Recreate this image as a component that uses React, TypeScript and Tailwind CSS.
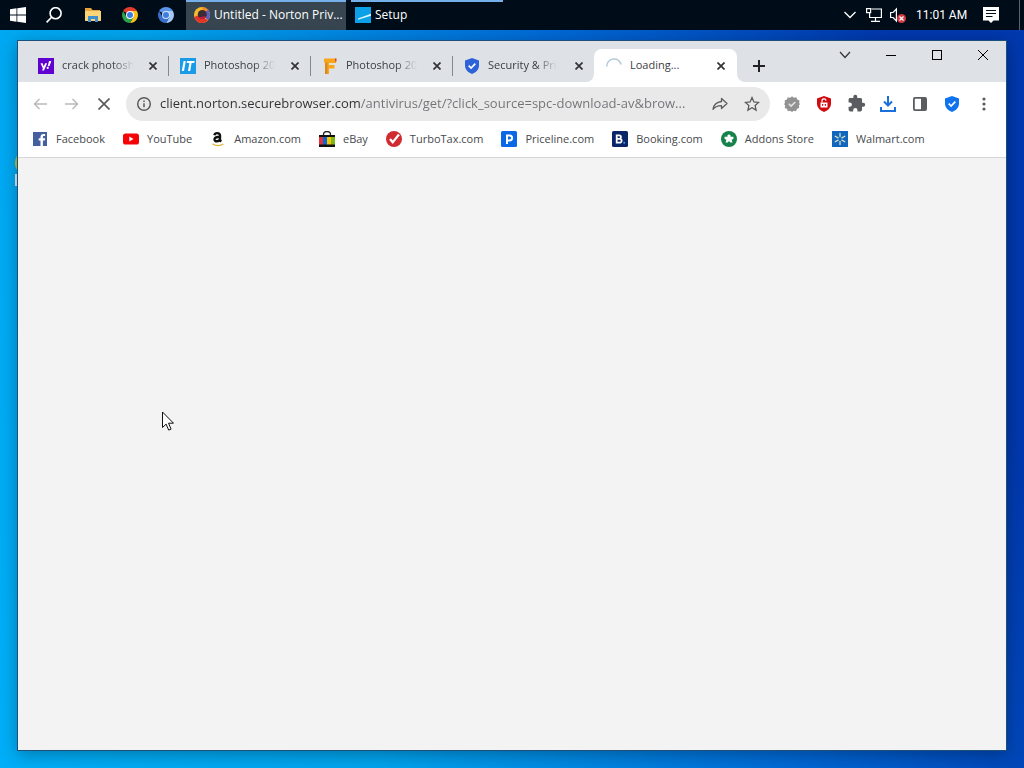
import type { ReactNode } from "react";

type Site = { name: string; icon: ReactNode };

const YahooIcon = () => (
  <svg viewBox="0 0 16 16" className="size-4 shrink-0" aria-hidden="true">
    <path fill="#5f01d1" d="M0 0h16v16H0z" />
    <path fill="#fff" d="M2.5 5.3h2.1l1.2 3.1 1.3-3.1h2L6 12.6H4l.9-2zM11 3h2.4l-2 5.2H9.7z" />
    <circle cx="9.7" cy="9.9" r="1.1" fill="#fff" />
  </svg>
);

const ItIcon = () => (
  <svg viewBox="0 0 16 16" className="size-4 shrink-0" aria-hidden="true">
    <path fill="#1a9be8" d="M0 0h16v16H0z" />
    <path fill="#fff" d="M3.6 3h2.1L4 13H1.8zM7 3h7.6l-.4 2.1h-2.6L10.2 13H8l1.4-7.900H6.600z" />
  </svg>
);

const FIcon = () => (
  <svg viewBox="0 0 16 16" className="size-4 shrink-0" aria-hidden="true">
    <path fill="#f9a51a" d="M2 .5h12V5H7v2h5.500v3.500H7V16H3V5L2 4z" />
    <path fill="#d98a1d" d="M3 4.500h2.500V16H3z" />
    <path fill="#d6453d" d="M13 .5h1.500v3H13z" />
  </svg>
);

const ShieldIcon = ({ color }: { color: string }) => (
  <svg viewBox="0 0 16 16" className="size-4 shrink-0" aria-hidden="true">
    <path fill={color} d="M8 0l7 2.4v5.1c0 3.8-2.8 7-7 8.5-4.2-1.5-7-4.7-7-8.5V2.4z" />
    <path fill="none" stroke="#fff" strokeWidth="1.7" d="M4.7 7.6l2.4 2.4 4.2-4.3" />
  </svg>
);

const SpinnerIcon = () => (
  <svg viewBox="0 0 16 16" className="size-4 shrink-0" aria-hidden="true">
    <path fill="none" stroke="#b5cbd9" strokeWidth="1.5" d="M.8 8.5A7.2 7.2 0 0 1 15 6.5" />
  </svg>
);

const FacebookIcon = () => (
  <svg viewBox="0 0 16 16" className="size-4 shrink-0" aria-hidden="true">
    <path fill="#4460a0" d="M1 1h14v14H1z" />
    <path fill="#fff" d="M8.5 15V9.5H6.7V7.3h1.8V6c0-2 1.2-3 2.9-3l1.7.1v2h-1.2c-.8 0-1 .4-1 1v1.2h2.2l-.3 2.2h-1.9V15z" />
  </svg>
);

const YouTubeIcon = () => (
  <svg viewBox="0 0 16 16" className="size-4 shrink-0" aria-hidden="true">
    <rect y="2.5" width="16" height="11" rx="2.6" fill="#f40407" />
    <path fill="#fff" d="M6.3 5.6v4.8L10.5 8z" />
  </svg>
);

const AmazonIcon = () => (
  <svg viewBox="0 0 16 16" className="size-4 shrink-0" aria-hidden="true">
    <path fill="none" stroke="#111" strokeWidth="2.4" d="M4.4 4.2C4.8 1.7 10 1.2 10 4.5v4c0 1 .4 1.4 1.2 2.2M10 5.8C6.2 5.8 4.5 6.6 4.5 8.6c0 2.5 4.5 2.2 5.5-.5" />
    <path fill="none" stroke="#e8b53b" strokeWidth="1.2" d="M2.5 12.8c3 2.4 8 2.4 10.8.2" />
  </svg>
);

const EbayIcon = () => (
  <svg viewBox="0 0 16 16" className="size-4 shrink-0" aria-hidden="true">
    <path fill="none" stroke="#222" strokeWidth="1.3" d="M4.500 5V3.500a3.500 3 0 0 1 7 0V5" />
    <path fill="#111" d="M0 4h16v12H0z" />
    <path fill="#e53238" d="M0 6h4v7.500H0z" />
    <path fill="#0968d8" d="M4 6h4v7.500H4z" />
    <path fill="#f5c400" d="M8 6h4v7.500H8z" />
    <path fill="#7db51a" d="M12 6h4v7.500h-4z" />
  </svg>
);

const TurboTaxIcon = () => (
  <svg viewBox="0 0 16 16" className="size-4 shrink-0" aria-hidden="true">
    <circle cx="8" cy="8" r="8" fill="#cf2b30" />
    <path fill="none" stroke="#fff" strokeWidth="2.2" d="M4 8l2.7 3.3L13 3.5" />
  </svg>
);

const PricelineIcon = () => (
  <svg viewBox="0 0 16 16" className="size-4 shrink-0" aria-hidden="true">
    <rect width="16" height="16" rx="1.5" fill="#0a68e6" />
    <path fill="none" stroke="#fff" strokeWidth="2" d="M6 13V4.500h2.600a2.500 2.500 0 0 1 0 5H6" />
  </svg>
);

const BookingIcon = () => (
  <svg viewBox="0 0 16 16" className="size-4 shrink-0" aria-hidden="true">
    <rect width="16" height="16" rx="1.5" fill="#0a2568" />
    <path fill="none" stroke="#fff" strokeWidth="1.8" d="M4.7 4.3h2.5a1.7 1.7 0 0 1 0 3.5H4.7h3a1.9 1.9 0 0 1 0 3.900h-3z" />
    <circle cx="12.2" cy="11.7" r="1" fill="#3aa5e8" />
  </svg>
);

const AddonsIcon = () => (
  <svg viewBox="0 0 16 16" className="size-4 shrink-0" aria-hidden="true">
    <circle cx="8" cy="8" r="8" fill="#14824a" />
    <path fill="#fff" d="M8 3.5a1.5 1.5 0 0 1 1.5 2.2h2.9v2.2l-1.8.8.9 2.8H9.2L8 10l-1.2 1.5H4.5l.9-2.8-1.800-.8V5.7h2.9A1.5 1.5 0 0 1 8 3.5z" />
  </svg>
);

const WalmartIcon = () => (
  <svg viewBox="0 0 16 16" className="size-4 shrink-0" aria-hidden="true">
    <path fill="#1266bd" d="M0 0h16v16H0z" />
    <path
      stroke="#d6e6c4"
      strokeWidth="1.3"
      strokeLinecap="round"
      d="M8 2.5v3.2M8 10.3v3.2M3.2 5.3l2.9 1.6M9.9 9.1l2.9 1.6M12.8 5.3L9.9 6.9M6.1 9.1l-2.9 1.6"
    />
  </svg>
);

const ChromeIcon = ({ blue = false }: { blue?: boolean }) => (
  <svg viewBox="0 0 16 16" className="size-4" aria-hidden="true">
    <path fill={blue ? "#5a93ea" : "#e33b2e"} d="M8 8L1.1 4A8 8 0 0 1 14.9 4z" />
    <path fill={blue ? "#a3c8f8" : "#fbc116"} d="M8 8V4h6.9A8 8 0 0 1 8 16l3.5-6z" />
    <path fill={blue ? "#3a70cc" : "#2ba24c"} d="M8 8l3.5 2L8 16A8 8 0 0 1 1.1 4l3.4 6z" />
    <circle cx="8" cy="8" r="4" fill={blue ? "#d5e5fb" : "#fff"} />
    <circle cx="8" cy="8" r="3" fill="#3b7de0" />
  </svg>
);

const NortonIcon = () => (
  <svg viewBox="0 0 16 16" className="size-4 shrink-0" aria-hidden="true">
    <circle cx="8" cy="8" r="8" fill="#f6ba2a" />
    <path fill="#5a5fc0" d="M10 .3a8 8 0 0 1 4 13L9 8z" />
    <path fill="#e4332b" d="M.3 10L5 8l9 5.300A8 8 0 0 1 .3 10z" />
    <path fill="#f08a24" d="M8 0a8 8 0 0 1 6 2.700L10 7z" />
    <circle cx="8.3" cy="7.5" r="4.5" fill="#3c2a35" />
    <path fill="#c3203d" d="M4.500 10c2 2.500 5 2.600 7.500.6l-1-1.600-3 1z" />
  </svg>
);

const CloseGlyph = () => (
  <svg viewBox="0 0 8 8" className="size-2" aria-hidden="true">
    <path stroke="#303236" strokeWidth="1.7" d="M.5.5l7 7M7.5.5l-7 7" />
  </svg>
);

const tabs: Site[] = [
  { name: "crack photosh", icon: <YahooIcon /> },
  { name: "Photoshop 20", icon: <ItIcon /> },
  { name: "Photoshop 20", icon: <FIcon /> },
  { name: "Security & Pri", icon: <ShieldIcon color="#2d62d8" /> },
];

const bookmarks: Site[] = [
  { name: "Facebook", icon: <FacebookIcon /> },
  { name: "YouTube", icon: <YouTubeIcon /> },
  { name: "Amazon.com", icon: <AmazonIcon /> },
  { name: "eBay", icon: <EbayIcon /> },
  { name: "TurboTax.com", icon: <TurboTaxIcon /> },
  { name: "Priceline.com", icon: <PricelineIcon /> },
  { name: "Booking.com", icon: <BookingIcon /> },
  { name: "Addons Store", icon: <AddonsIcon /> },
  { name: "Walmart.com", icon: <WalmartIcon /> },
];

const ToolButton = ({ label, children }: { label: string; children: ReactNode }) => (
  <button aria-label={label} className="flex h-8 w-8 shrink-0 items-center justify-center">
    {children}
  </button>
);

const Taskbar = () => (
  <header className="flex h-[30px] items-stretch bg-[#000d19] text-xs text-white">
    <button aria-label="Start" className="flex w-9 items-center justify-center">
      <svg viewBox="0 0 16 16" className="size-4" aria-hidden="true">
        <path fill="#fff" d="M0 2.2l6.5-.9v6.200H0zM7.3 1.200L16 0v7.500H7.300zM0 8.400h6.500v6.300L0 13.800zM7.300 8.400H16V16l-8.700-1.200z" />
      </svg>
    </button>
    <button aria-label="Search" className="flex w-9 items-center justify-center">
      <svg viewBox="0 0 16 16" className="size-4" fill="none" stroke="#fff" strokeWidth="1.6" aria-hidden="true">
        <circle cx="9.6" cy="6.2" r="5.5" />
        <path d="M5.6 10.2L.6 15.4" />
      </svg>
    </button>
    <button aria-label="File Explorer" className="flex w-[42px] items-center justify-center">
      <svg viewBox="0 0 16 16" className="size-4" aria-hidden="true">
        <path fill="#e9a33b" d="M0 1h6l1.5 2H15v4H0z" />
        <path fill="#fbd477" d="M0 4h16v10H0z" />
        <path fill="#3d8fcf" d="M3 9h10v6h-3v-3H6v3H3z" />
      </svg>
    </button>
    <button aria-label="Google Chrome" className="flex w-8 items-center justify-center">
      <ChromeIcon />
    </button>
    <button aria-label="Chromium" className="flex w-10 items-center justify-center">
      <ChromeIcon blue />
    </button>
    <button className="flex w-40 items-center gap-1 border-t-2 border-[#76b0e8] bg-[#36454f] px-2 pb-0.5 text-left">
      <NortonIcon />
      <span className="whitespace-nowrap">Untitled - Norton Priv...</span>
    </button>
    <button className="ml-[5px] flex w-[152px] items-center gap-1 border-t-2 border-[#76b0e8] px-1 pb-0.5 text-left">
      <svg viewBox="0 0 16 16" className="size-4 shrink-0" aria-hidden="true">
        <path fill="#0ca0e8" d="M0 0h16v16H0z" />
        <path fill="#d7fbff" d="M3 11.5l13-4.8v2L3 12.8z" />
      </svg>
      <span>Setup</span>
    </button>

    <div className="ml-auto flex items-center">
      <button aria-label="Show hidden icons" className="flex w-6 justify-center">
        <svg viewBox="0 0 12 8" className="h-2 w-3" fill="none" stroke="#fff" strokeWidth="1.3" aria-hidden="true">
          <path d="M.5 1l5.5 5.5L11.5 1" />
        </svg>
      </button>
      <button aria-label="Network" className="flex w-6 justify-center">
        <svg viewBox="0 0 16 16" className="size-4" fill="none" stroke="#fff" strokeWidth="1.2" aria-hidden="true">
          <path d="M5.500 2h9.900v8.500H3.600V6M9.500 10.500v3.500M5 14.400h9M.6 1.600h4v4h-4z" />
        </svg>
      </button>
      <button aria-label="Volume muted" className="flex w-6 justify-center">
        <svg viewBox="0 0 16 16" className="size-4" aria-hidden="true">
          <path fill="none" stroke="#fff" strokeWidth="1.2" d="M.6 5.5h2.5L6.4 2v12l-3.300-3.500H.6z" />
          <circle cx="11.5" cy="11.5" r="4.5" fill="#d13a43" />
          <path stroke="#fff" strokeWidth="1.2" d="M9.5 9.5l4 4M13.5 9.5l-4 4" />
        </svg>
      </button>
      <time className="w-16 pl-[6px] font-['Roboto',sans-serif] whitespace-nowrap">11:01 AM</time>
      <button aria-label="Notifications" className="mr-1 flex h-full w-[46px] items-center justify-center border-r border-[#59646e] pr-3">
        <svg viewBox="0 0 16 16" className="size-4" aria-hidden="true">
          <path fill="#fff" d="M0 0h16v13.5h-5.5L8 16l-2.5-2.5H0z" />
          <path stroke="#000d19" d="M3 3.5h10M3 6.5h10M3 9.5h6.5" />
        </svg>
      </button>
    </div>
  </header>
);

const TabStrip = () => (
  <div className="flex h-[41px] bg-[#dee1e6]">
    <div role="tablist" className="flex items-end pl-2">
      {tabs.map((tab, i) => (
        <div key={i} className="relative flex h-[33px] w-[142px] items-center pl-3">
          <button role="tab" aria-selected="false" className="flex w-[97px] items-center gap-2">
            {tab.icon}
            <span className="text-left whitespace-nowrap text-[#3c4043] [mask-image:linear-gradient(to_right,black_70%,transparent)]">
              {tab.name}
            </span>
          </button>
          <button aria-label={`Close ${tab.name}`} className="ml-2.5 flex size-4 items-center justify-center">
            <CloseGlyph />
          </button>
          {i < 3 && <span className="absolute top-[7px] -right-px h-5 w-px bg-[#85888c]" />}
        </div>
      ))}
      <div className="relative flex h-[33px] w-[143px] items-center rounded-t-lg bg-white pl-3">
        <svg viewBox="0 0 8 8" className="absolute bottom-0 -left-2 size-2" aria-hidden="true">
          <path fill="#fff" d="M8 0v8H0a8 8 0 0 0 8-8z" />
        </svg>
        <button role="tab" aria-selected="true" className="flex w-[97px] items-center gap-2 text-[#3c4043]">
          <SpinnerIcon />
          <span>Loading...</span>
        </button>
        <button aria-label="Close tab" className="ml-2.5 flex size-4 items-center justify-center">
          <CloseGlyph />
        </button>
        <svg viewBox="0 0 8 8" className="absolute -right-2 bottom-0 size-2" aria-hidden="true">
          <path fill="#fff" d="M0 0v8h8a8 8 0 0 1-8-8z" />
        </svg>
      </div>
    </div>
    <button aria-label="New tab" className="mt-[11px] ml-2 flex size-7 items-center justify-center">
      <svg viewBox="0 0 12 12" className="size-3" stroke="#202124" strokeWidth="2" aria-hidden="true">
        <path d="M6 0v12M0 6h12" />
      </svg>
    </button>
    <div className="ml-auto flex h-7">
      <button aria-label="Search tabs" className="flex w-[46px] items-center justify-center">
        <svg viewBox="0 0 12 8" className="h-2 w-3" fill="none" stroke="#333" strokeWidth="1.2" aria-hidden="true">
          <path d="M1 1l5 5.5L11 1" />
        </svg>
      </button>
      <button aria-label="Minimize" className="flex w-[46px] items-center justify-center">
        <span className="h-px w-2.5 bg-black" />
      </button>
      <button aria-label="Maximize" className="flex w-[46px] items-center justify-center">
        <span className="size-2.5 border border-black" />
      </button>
      <button aria-label="Close window" className="flex w-[46px] items-center justify-center">
        <svg viewBox="0 0 10 10" className="size-2.5" stroke="#000" aria-hidden="true">
          <path d="M0 0l10 10M10 0L0 10" />
        </svg>
      </button>
    </div>
  </div>
);

const Toolbar = () => (
  <div className="flex h-[43px] items-center px-[6px]">
    <ToolButton label="Back">
      <svg viewBox="0 0 14 12" className="h-3 w-3.5" fill="none" stroke="#bbb" strokeWidth="1.5" aria-hidden="true">
        <path d="M14 6H1.5M6.5 1l-5 5 5 5" />
      </svg>
    </ToolButton>
    <ToolButton label="Forward">
      <svg viewBox="0 0 14 12" className="h-3 w-3.5" fill="none" stroke="#bbb" strokeWidth="1.5" aria-hidden="true">
        <path d="M0 6h12.5M7.5 1l5 5-5 5" />
      </svg>
    </ToolButton>
    <ToolButton label="Stop loading">
      <svg viewBox="0 0 12 12" className="size-3" stroke="#5a5c5f" strokeWidth="1.7" aria-hidden="true">
        <path d="M.5.5l11 11M11.5.5l-11 11" />
      </svg>
    </ToolButton>
    <div className="mx-[6px] flex h-[34px] min-w-0 flex-1 items-center rounded-full bg-[#e9e9ea] pr-0.5 pl-2.5">
      <svg viewBox="0 0 16 16" className="size-4 shrink-0" fill="none" stroke="#5a5c5f" strokeWidth="1.5" aria-hidden="true">
        <circle cx="8" cy="8" r="6.3" />
        <path d="M8 7.2v4M8 4.4v1.5" />
      </svg>
      {/* host part is darker than the path */}
      <input
        aria-label="Address"
        defaultValue="client.norton.securebrowser.com/antivirus/get/?click_source=spc-download-av&brow..."
        className="ml-2 min-w-0 flex-1 bg-[linear-gradient(to_right,#303134_201px,#707275_201px)] bg-clip-text text-[13px] text-transparent outline-none"
      />
      <ToolButton label="Share">
        <svg viewBox="0 0 16 16" className="size-4" fill="none" stroke="#5a5c5f" strokeWidth="1.3" strokeLinejoin="round" aria-hidden="true">
          <path d="M9.5 2.5l5.5 5-5.5 5V9.7C5.5 9.7 3 10.8 1 13.3c.5-4 3.2-7 8.5-7.8z" />
        </svg>
      </ToolButton>
      <ToolButton label="Bookmark this page">
        <svg viewBox="0 0 16 16" className="size-4" fill="none" stroke="#5a5c5f" strokeWidth="1.3" aria-hidden="true">
          <path d="M8 1.6l1.9 4.3 4.7.5-3.5 3.1 1 4.6L8 11.7l-4.1 2.4 1-4.6-3.5-3.1 4.7-.5z" />
        </svg>
      </ToolButton>
    </div>
    <ToolButton label="Verified site">
      <svg viewBox="0 0 16 16" className="size-4" aria-hidden="true">
        <path
          fill="#929292"
          d="M8 .2l1.9 1.5 2.4-.4.9 2.3 2.3.9-.4 2.4L16 8l-1.2 1.6.5 2.3-2.3.9-.9 2.4-2.3-.5L8 16l-1.8-1.3-2.3.5-.9-2.4-2.3-.9.5-2.3L0 8l1-1.1-.4-2.4 2.3-.9.9-2.3 2.4.4z"
        />
        <path fill="none" stroke="#e4e4e4" strokeWidth="1.5" d="M4.8 7.8l2.3 2.3L11.3 6" />
      </svg>
    </ToolButton>
    <ToolButton label="Password manager">
      <svg viewBox="0 0 16 16" className="size-4" aria-hidden="true">
        <path fill="#d10a10" d="M8 0l7 2.4v5.1c0 3.8-2.8 7-7 8.5-4.2-1.5-7-4.7-7-8.5V2.4z" />
        <path fill="#fff" d="M4.5 6.5h7v5h-7z" />
        <path fill="none" stroke="#fff" strokeWidth="1.2" d="M6 6.5V5a2 2 0 0 1 4-.4" />
        <path fill="#d10a10" d="M6 8h1.2v1.8H6zM8.8 8H10v1.8H8.8z" />
      </svg>
    </ToolButton>
    <ToolButton label="Extensions">
      <svg viewBox="0 0 24 24" className="size-[19px]" fill="#5a5c5f" aria-hidden="true">
        <path d="M20.5 11H19V7c0-1.1-.9-2-2-2h-4V3.5a2.5 2.5 0 0 0-5 0V5H4c-1.1 0-2 .9-2 2v3.8h1.5a2.7 2.7 0 0 1 0 5.4H2V20c0 1.1.9 2 2 2h3.8v-1.5a2.7 2.7 0 0 1 5.4 0V22H17c1.1 0 2-.9 2-2v-4h1.5a2.5 2.5 0 0 0 0-5z" />
      </svg>
    </ToolButton>
    <ToolButton label="Downloads">
      <svg viewBox="0 0 16 16" className="size-4" fill="none" stroke="#1a6fdc" strokeWidth="2" aria-hidden="true">
        <path d="M8 0v9M4 5.5l4 4 4-4M1 11v4h14v-4" />
      </svg>
    </ToolButton>
    <ToolButton label="Side panel">
      <svg viewBox="0 0 16 16" className="size-4" aria-hidden="true">
        <rect x="1.9" y="1.9" width="12.2" height="12.2" rx="1" fill="none" stroke="#5a5c5f" strokeWidth="1.8" />
        <path fill="#5a5c5f" d="M9 2h5v12H9z" />
      </svg>
    </ToolButton>
    <ToolButton label="Security status">
      <ShieldIcon color="#0f73ee" />
    </ToolButton>
    <ToolButton label="Menu">
      <svg viewBox="0 0 16 16" className="size-4" fill="#5a5c5f" aria-hidden="true">
        <circle cx="8" cy="3" r="1.6" />
        <circle cx="8" cy="8" r="1.6" />
        <circle cx="8" cy="13" r="1.6" />
      </svg>
    </ToolButton>
  </div>
);

const BookmarksBar = () => (
  <nav className="flex h-[33px] items-center gap-[18px] border-b border-[#d6d7da] px-3.5 pb-1 whitespace-nowrap">
    {bookmarks.map((site) => (
      <a key={site.name} href="#" className="flex items-center gap-2 text-[#484a4d]">
        {site.icon}
        <span>{site.name}</span>
      </a>
    ))}
  </nav>
);

const App = () => (
  <div className="relative flex min-h-screen flex-col overflow-hidden bg-[linear-gradient(72deg,#00aff8_0%,#00a4ee_30%,#0069d6_62%,#0038ad_88%)] font-['Open_Sans','Noto_Sans',sans-serif]">
    <Taskbar />
    {/* desktop shortcut peeking out behind the window */}
    <svg viewBox="0 0 16 36" className="absolute top-[150px] left-[15px] h-9 w-4" aria-hidden="true">
      <circle cx="13" cy="13" r="13" fill="#b5c93a" />
      <path fill="#d9ecf8" d="M0 24h3v12H0z" />
    </svg>
    <div className="relative mx-[17px] mt-2.5 mb-[17px] flex flex-1 flex-col border border-[#1d4f7c] bg-white text-[11px] shadow-[0_4px_16px_rgba(0,0,0,0.3)]">
      <TabStrip />
      <Toolbar />
      <BookmarksBar />
      <main className="flex-1 bg-[#f3f3f3]" />
    </div>
    <svg viewBox="0 0 12 20" className="absolute top-[411px] left-[162px] h-5 w-3" aria-hidden="true">
      <path fill="#fff" stroke="#111" d="M.5 1v15.5l3.6-3.4 2.6 6 2.4-1-2.6-5.9h5z" />
    </svg>
  </div>
);

export default App;
